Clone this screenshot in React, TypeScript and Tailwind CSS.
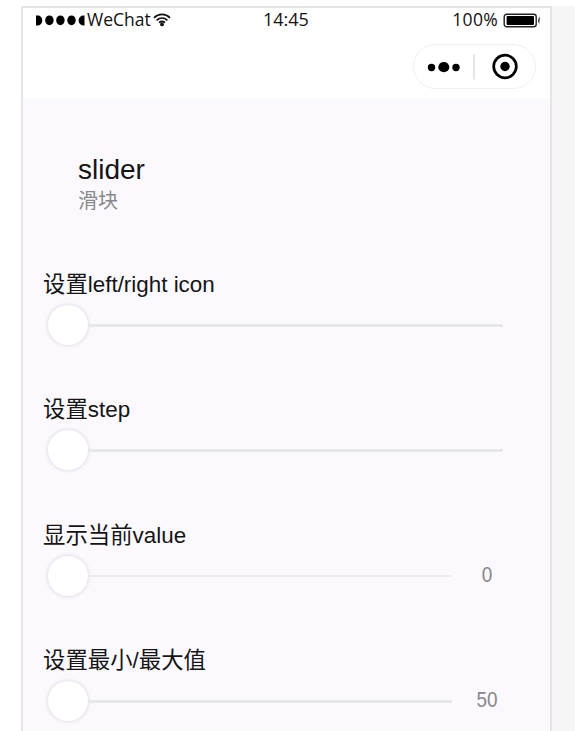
type Row = { label: string; value?: number; thin?: boolean };

const rows: Row[] = [
  { label: '设置left/right icon' },
  { label: '设置step' },
  { label: '显示当前value', value: 0, thin: true },
  { label: '设置最小/最大值', value: 50 },
];

function StatusBar() {
  return (
    <div className="flex h-[25px] items-start font-['Open_Sans','Noto_Sans',sans-serif] text-[17.5px] leading-[22px] text-[#111]">
      <div className="flex w-[230px] shrink-0 items-start pl-[12px]">
        <svg className="mt-[7px] h-[11px] w-[51px] shrink-0" viewBox="0 0 51 11">
          <path d="M1 .5h2a4 4.7 0 0 1 0 10H1z" />
          <ellipse cx="14.4" cy="5.3" rx="4.2" ry="4.9" />
          <ellipse cx="25.4" cy="5.3" rx="4.2" ry="4.9" />
          <ellipse cx="36.5" cy="5.3" rx="4.2" ry="4.9" />
          <path d="M49.5 .5h-1.2a4.5 4.8 0 0 0 0 10h1.2z" />
        </svg>
        <span className="w-[67px] whitespace-nowrap pl-px">WeChat</span>
        <svg className="mt-[5px] h-[14px] w-[18px] shrink-0" viewBox="0 0 18 14" fill="none" stroke="#111" strokeWidth="1.7">
          <path d="M1 4.8C5.5 .3 12.5 .3 17 4.8M3.6 7.4C6.8 4.4 11.2 4.4 14.4 7.4M6 9.7q3-2.4 6 0" />
          <circle cx="9" cy="11.4" r="1.9" fill="#111" stroke="none" />
        </svg>
      </div>
      <span className="w-[70px] pl-[10px] text-[18px]">14:45</span>
      <span className="ml-auto whitespace-nowrap pr-[5px] text-[17.5px] tracking-[0.3px]">100%</span>
      <svg className="mr-[9px] mt-[5px] h-[15px] w-[38px] shrink-0" viewBox="0 0 38 15">
        <rect x="1.2" y="1.2" width="32" height="12.6" rx="2.5" fill="none" stroke="#222" strokeWidth="1.4" />
        <rect x="3.6" y="3" width="27.4" height="9" rx="1" />
        <path d="M37 3.5q-3.5 3.5-.8 7.5z" fill="#333" />
      </svg>
    </div>
  );
}

function Capsule() {
  return (
    <div className="ml-auto mr-[14px] mt-[11px] flex h-[45px] w-[123px] items-center rounded-full border-[1.5px] border-[#f0f0f0] bg-white">
      <svg className="h-[41px] w-[120px] shrink-0" viewBox="0 0 120 41">
        <circle cx="17.5" cy="21.5" r="3.7" />
        <ellipse cx="29.8" cy="21.2" rx="5.5" ry="5.1" />
        <circle cx="42" cy="21.5" r="3.7" />
        <path d="M60 8.5v25" stroke="#dfdfdf" strokeWidth="1.6" />
        <circle cx="91" cy="20.5" r="11.3" fill="none" stroke="#000" strokeWidth="2.7" />
        <circle cx="91" cy="20.5" r="4.7" />
      </svg>
    </div>
  );
}

function SliderRow({ label, value, thin }: Row) {
  return (
    <section className="h-[125.4px] shrink-0">
      <h2 className="h-[33px] whitespace-nowrap pl-[20px] text-[22.4px] leading-8">{label}</h2>
      <div className="flex h-[46px] items-center pl-[25px]">
        <div className="size-10 shrink-0 rounded-full bg-white shadow-[0_0_4px_rgba(0,0,0,0.16)]" />
        <div
          className={`${value === undefined ? 'w-[415px]' : 'w-[364px]'} ${thin ? 'h-[2px] bg-[#ebebed]' : 'h-[3px] bg-[#e7e7e9]'} shrink-0`}
        />
        {value !== undefined && (
          <span className="ml-[8px] w-[54px] scale-x-[0.86] pb-[2px] text-center text-[22px] leading-6 text-[#888]">{value}</span>
        )}
      </div>
    </section>
  );
}

export default function App() {
  return (
    <div className="flex h-[731px] w-[575px] overflow-hidden bg-white pl-[21px] pt-[6px] font-['Liberation_Sans','Noto_Sans_CJK_SC',sans-serif] text-[#151515]">
      <main className="h-[740px] w-[531px] shrink-0 border-2 border-[#e5e5e7] bg-[#fbf9fe]">
        <header className="h-[91px] bg-white">
          <StatusBar />
          <Capsule />
        </header>
        <div className="h-[170px] pl-[55px] pt-[54px]">
          <h1 className="h-[34px] text-[28px] leading-[34px]">slider</h1>
          <p className="text-[20px] leading-[28px] text-[#888]">滑块</p>
        </div>
        {rows.map((row) => (
          <SliderRow key={row.label} {...row} />
        ))}
      </main>
      <div className="h-[740px] flex-1 bg-[#f6f6f6]" />
    </div>
  );
}
